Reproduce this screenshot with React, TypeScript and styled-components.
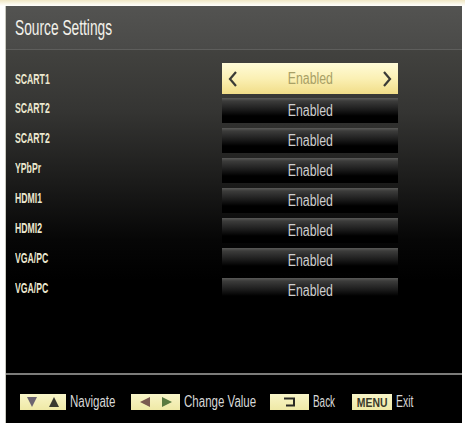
import React from "react";
import styled, { createGlobalStyle } from "styled-components";

const GlobalStyle = createGlobalStyle`
  html, body { margin: 0; padding: 0; background: #ffffff; overflow: hidden; }
  body { font-family: "Liberation Sans", Arial, sans-serif; }
`;

const Page = styled.div`
  width: 465px;
  height: 423px;
  padding: 6px 3px 0 5px;
  box-sizing: border-box;
  background: linear-gradient(#efe6c4 0px, #fbf8ec 4px, #ffffff 6px);
  display: flex;
`;

const Screen = styled.div`
  flex: 1;
  display: flex;
  flex-direction: column;
  border-left: 1px solid #c9c9c0;
  background: #000;
`;

/* condensed TV-menu lettering: the narrow face is emulated by a horizontal squeeze */
const Narrow = styled.span<{ $s: number; $o?: string }>`
  display: inline-block;
  white-space: nowrap;
  transform: scaleX(${(p) => p.$s});
  transform-origin: ${(p) => p.$o ?? "left"} center;
`;

const TitleBar = styled.div`
  height: 43px;
  display: flex;
  align-items: center;
  padding-left: 9px;
  background: linear-gradient(#535351, #4a4a48);
  border-bottom: 1px solid #5e5e5c;
  box-shadow: 0 1px 0 #2e2e2d;
  color: #f2f1ea;
  font-size: 22px;
`;

const Content = styled.div`
  flex: 1;
  padding-top: 13px;
  background: linear-gradient(#42423f 0px, #353533 60px, #1c1c1b 130px, #060606 190px, #000 230px);
  display: flex;
  flex-direction: column;
`;

const List = styled.div`
  display: flex;
  flex-direction: column;
`;

const Row = styled.div`
  height: 30px;
  display: grid;
  grid-template-columns: 207px 176px;
  align-items: center;
  padding-left: 9px;
`;

const Label = styled.div`
  color: #ece8d0;
  font-size: 14px;
  font-weight: bold;
`;

const ValueBox = styled.div<{ $active?: boolean }>`
  position: relative;
  height: ${(p) => (p.$active ? "31px" : "25px")};
  margin-top: ${(p) => (p.$active ? "0" : "5px")};
  display: flex;
  align-items: center;
  justify-content: center;
  font-size: 16px;
  color: ${(p) => (p.$active ? "#a8a066" : "#cfcfcf")};
  background: ${(p) =>
    p.$active
      ? "linear-gradient(#fffbd8, #fbf0b4 50%, #f1dd88)"
      : "linear-gradient(#5a5a58 0px, #3c3c3b 3px, #1e1e1e 11px, #000 18px)"};
`;

const Arrow = styled.span<{ $side: "left" | "right" }>`
  position: absolute;
  top: 50%;
  ${(p) => (p.$side === "left" ? "left: 6px;" : "right: 6px;")}
  transform: translateY(-50%);
  display: flex;
`;

const Footer = styled.div`
  height: 50px;
  border-top: 2px solid #7c7c7a;
  background: #000;
  display: flex;
  align-items: center;
  padding: 6px 0 0 14px;
  box-sizing: border-box;
`;

const Hint = styled.div<{ $w?: number }>`
  display: flex;
  align-items: center;
  min-width: 0;
  flex: 0 0 ${(p) => (p.$w ? `${p.$w}px` : "auto")};
`;

const Key = styled.div<{ $w: number }>`
  flex: 0 0 ${(p) => p.$w}px;
  height: 16px;
  background: linear-gradient(#f8f5c8, #efe9a6);
  display: flex;
  align-items: center;
  justify-content: center;
  gap: 12px;
  margin-right: 4px;
  font-size: 13px;
  font-weight: bold;
  color: #3b3a2a;
`;

const HintText = styled.span`
  color: #d8d8d8;
  font-size: 16px;
`;

const Tri = ({ dir, color }: { dir: "up" | "down" | "left" | "right"; color: string }) => {
  const pts = {
    up: "0,10 5,0 10,10",
    down: "0,0 10,0 5,10",
    left: "10,0 10,10 0,5",
    right: "0,0 0,10 10,5",
  }[dir];
  return (
    <svg width="10" height="10" viewBox="0 0 10 10">
      <polygon points={pts} fill={color} />
    </svg>
  );
};

const sources = ["SCART1", "SCART2", "SCART2", "YPbPr", "HDMI1", "HDMI2", "VGA/PC", "VGA/PC"];

export default function App() {
  return (
    <>
      <GlobalStyle />
      <Page>
        <Screen>
          <TitleBar>
            <Narrow $s={0.625}>Source Settings</Narrow>
          </TitleBar>
          <Content>
            <List>
              {sources.map((s, i) => (
                <Row key={i}>
                  <Label>
                    <Narrow $s={0.62}>{s}</Narrow>
                  </Label>
                  <ValueBox $active={i === 0}>
                    {i === 0 && (
                      <Arrow $side="left">
                        <svg width="10" height="16" viewBox="0 0 10 16">
                          <polyline points="8,1 2,8 8,15" fill="none" stroke="#3a3a36" strokeWidth="2.2" />
                        </svg>
                      </Arrow>
                    )}
                    <Narrow $s={0.77} $o="center">Enabled</Narrow>
                    {i === 0 && (
                      <Arrow $side="right">
                        <svg width="10" height="16" viewBox="0 0 10 16">
                          <polyline points="2,1 8,8 2,15" fill="none" stroke="#3a3a36" strokeWidth="2.2" />
                        </svg>
                      </Arrow>
                    )}
                  </ValueBox>
                </Row>
              ))}
            </List>
          </Content>
          <Footer>
            <Hint $w={111}>
              <Key $w={46}>
                <Tri dir="down" color="#6c6470" />
                <Tri dir="up" color="#3a3a30" />
              </Key>
              <HintText>
                <Narrow $s={0.72}>Navigate</Narrow>
              </HintText>
            </Hint>
            <Hint $w={139}>
              <Key $w={49}>
                <Tri dir="left" color="#7a5a50" />
                <Tri dir="right" color="#5a7a40" />
              </Key>
              <HintText>
                <Narrow $s={0.72}>Change Value</Narrow>
              </HintText>
            </Hint>
            <Hint $w={82}>
              <Key $w={39}>
                <svg width="14" height="10" viewBox="0 0 14 10">
                  <polyline points="1,1.5 11,1.5 11,8.5 3,8.5" fill="none" stroke="#2a2a24" strokeWidth="2" />
                </svg>
              </Key>
              <HintText>
                <Narrow $s={0.62}>Back</Narrow>
              </HintText>
            </Hint>
            <Hint>
              <Key $w={40}>
                <Narrow $s={0.8} $o="center">MENU</Narrow>
              </Key>
              <HintText>
                <Narrow $s={0.65}>Exit</Narrow>
              </HintText>
            </Hint>
          </Footer>
        </Screen>
      </Page>
    </>
  );
}
